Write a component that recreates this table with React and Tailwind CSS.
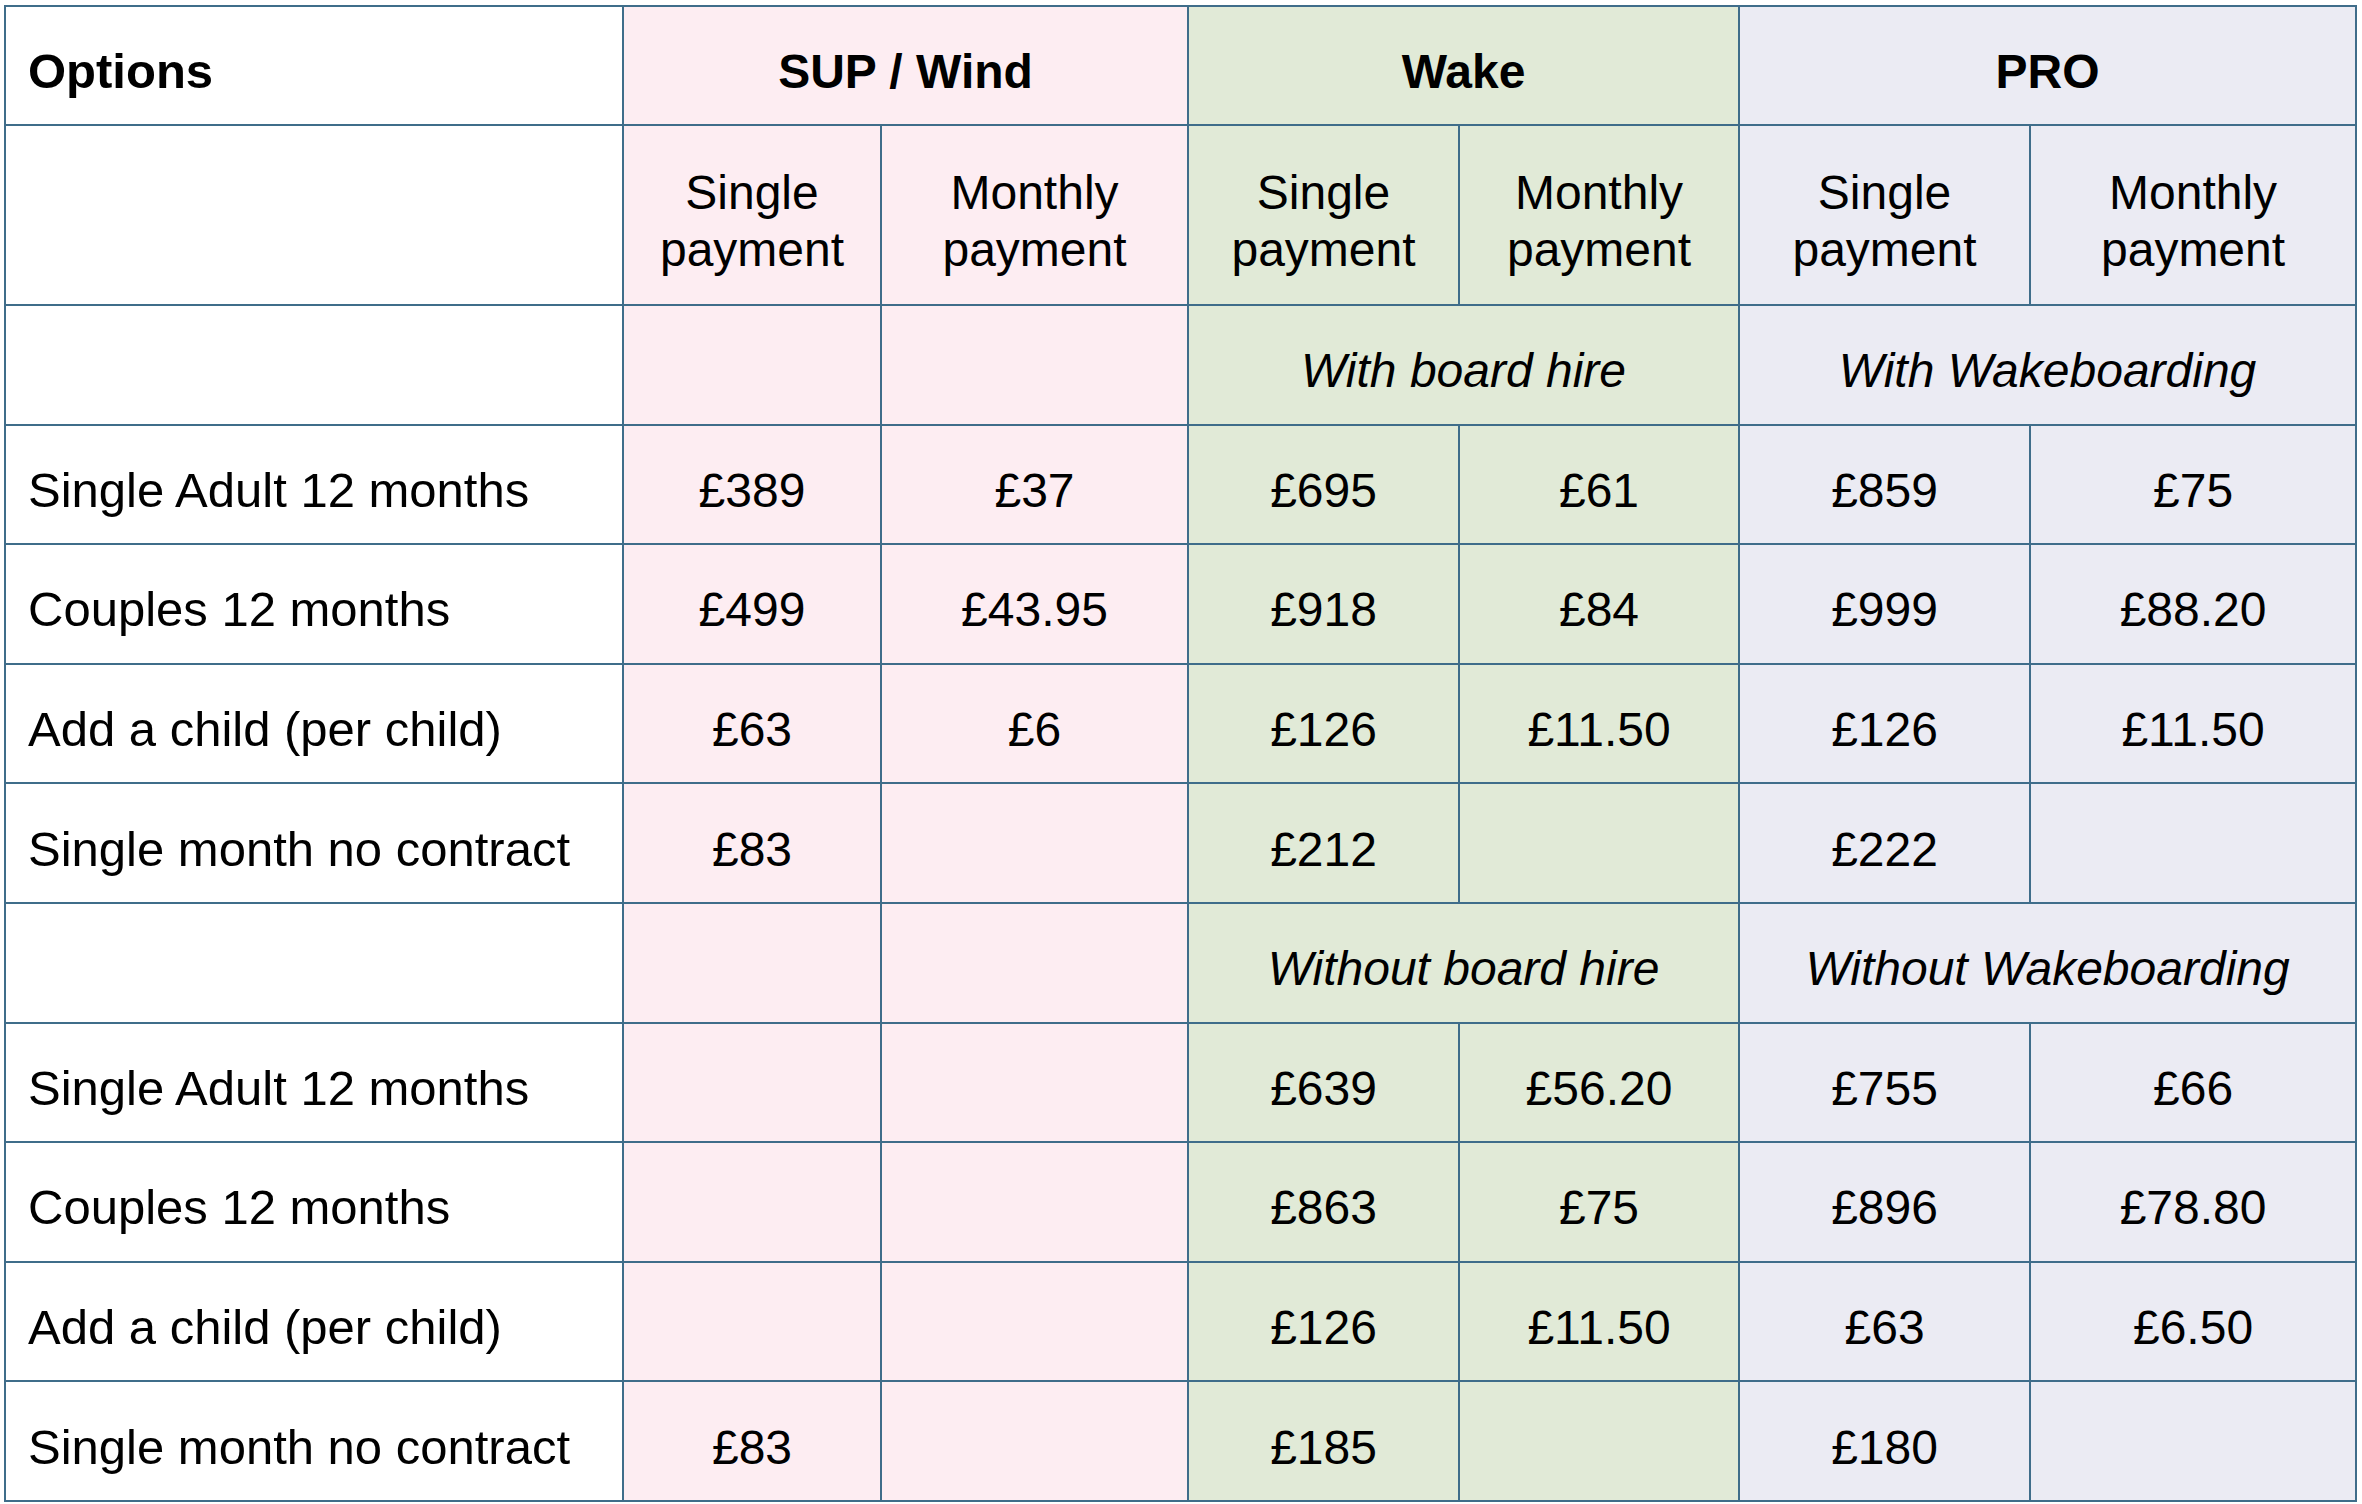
import React from 'react';

const pink = 'bg-[#fdedf2]';
const green = 'bg-[#e1ead7]';
const lilac = 'bg-[#ebebf3]';

const cell = 'border-2 border-[#3f6d8a] text-center align-middle pt-[12px]';
const label = 'border-2 border-[#3f6d8a] text-left align-middle pl-[22px] pt-[12px] text-[49px]';

const withHire = [
    ['Single Adult 12 months', '£389', '£37', '£695', '£61', '£859', '£75'],
    ['Couples 12 months', '£499', '£43.95', '£918', '£84', '£999', '£88.20'],
    ['Add a child (per child)', '£63', '£6', '£126', '£11.50', '£126', '£11.50'],
    ['Single month no contract', '£83', '', '£212', '', '£222', ''],
];

const withoutHire = [
    ['Single Adult 12 months', '', '', '£639', '£56.20', '£755', '£66'],
    ['Couples 12 months', '', '', '£863', '£75', '£896', '£78.80'],
    ['Add a child (per child)', '', '', '£126', '£11.50', '£63', '£6.50'],
    ['Single month no contract', '£83', '', '£185', '', '£180', ''],
];

const bgs = [pink, pink, green, green, lilac, lilac];

function PriceRow({ row }) {
    return (
        <tr className="h-[119.6px]">
            <td className={`${label} bg-white`}>{row[0]}</td>
            {row.slice(1).map((v, i) => (
                <td key={i} className={`${cell} ${bgs[i]}`}>{v}</td>
            ))}
        </tr>
    );
}

function SectionRow({ wake, pro }) {
    return (
        <tr className="h-[119.6px] italic">
            <td className={`${label} bg-white`}></td>
            <td className={`${cell} ${pink}`}></td>
            <td className={`${cell} ${pink}`}></td>
            <td colSpan={2} className={`${cell} ${green}`}>{wake}</td>
            <td colSpan={2} className={`${cell} ${lilac}`}>{pro}</td>
        </tr>
    );
}

export default function App() {
    return (
        <div className="min-h-screen bg-white pl-[4px] pt-[5px] text-black text-[48px] leading-[57px] font-['Liberation_Sans',Arial,sans-serif]">
            <table className="border-collapse table-fixed w-[2351px]">
                <colgroup>
                    <col className="w-[618px]" />
                    <col className="w-[258px]" />
                    <col className="w-[307px]" />
                    <col className="w-[271px]" />
                    <col className="w-[280px]" />
                    <col className="w-[291px]" />
                    <col className="w-[326px]" />
                </colgroup>
                <tbody>
                    <tr className="h-[119px] font-bold">
                        <td className={`${label} bg-white`}>Options</td>
                        <td colSpan={2} className={`${cell} ${pink}`}>SUP / Wind</td>
                        <td colSpan={2} className={`${cell} ${green}`}>Wake</td>
                        <td colSpan={2} className={`${cell} ${lilac}`}>PRO</td>
                    </tr>
                    <tr className="h-[180px]">
                        <td className={`${label} bg-white`}></td>
                        {bgs.map((bg, i) => (
                            <td key={i} className={`${cell} ${bg}`}>
                                {i % 2 === 0 ? 'Single' : 'Monthly'}
                                <br />
                                payment
                            </td>
                        ))}
                    </tr>
                    <SectionRow wake="With board hire" pro="With Wakeboarding" />
                    {withHire.map((row, i) => (
                        <PriceRow key={i} row={row} />
                    ))}
                    <SectionRow wake="Without board hire" pro="Without Wakeboarding" />
                    {withoutHire.map((row, i) => (
                        <PriceRow key={i} row={row} />
                    ))}
                </tbody>
            </table>
        </div>
    );
}
